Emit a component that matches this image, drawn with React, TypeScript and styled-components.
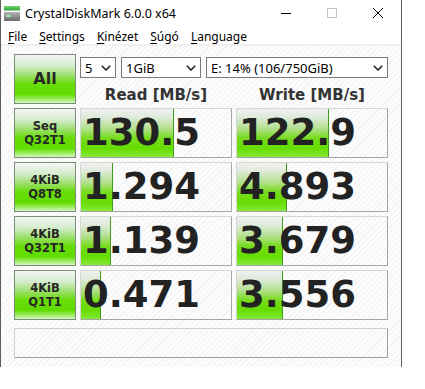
import React from "react";
import styled, { createGlobalStyle } from "styled-components";

const GlobalStyle = createGlobalStyle`
  html, body { margin: 0; padding: 0; background: #ffffff; }
  * { box-sizing: border-box; }
`;

const uiFont = `"Noto Sans", "Open Sans", sans-serif`;
const boldFont = `"DejaVu Sans", "Verdana", sans-serif`;

const Window = styled.div`
  width: 402px;
  height: 367px;
  border-left: 1px solid #5c5c5c;
  border-right: 1px solid #5c5c5c;
  border-bottom: 1px solid #5c5c5c;
  background: #ffffff;
  display: flex;
  flex-direction: column;
  font-family: ${uiFont};
`;

const TitleBar = styled.div`
  height: 26px;
  display: flex;
  align-items: center;
  padding-left: 3px;
`;

const TitleText = styled.div`
  margin-left: 5px;
  font-size: 12.5px;
  color: #000;
  flex: 1;
  white-space: nowrap;
`;

const CaptionButton = styled.div`
  width: 46px;
  height: 26px;
  display: flex;
  align-items: center;
  justify-content: center;
`;

const MenuBar = styled.div`
  height: 15px;
  padding-top: 3px;
  display: flex;
  align-items: center;
  border-bottom: 2px solid #f0f0f0;
  box-sizing: content-box;
`;

const MenuItem = styled.div`
  padding: 0 6px;
  font-size: 12px;
  color: #000;
  white-space: nowrap;
  &:first-child { padding-left: 7px; }
  u { text-decoration: underline; text-underline-offset: 2px; }
`;

const Client = styled.div`
  flex: 1;
  padding: 8px 13px 8px 13px;
  background: repeating-linear-gradient(135deg, #fcfcfc 0px, #fcfcfc 3px, #f2f2f2 3px, #f2f2f2 4px);
`;

const Grid = styled.div`
  display: grid;
  grid-template-columns: 62px 152px 152px;
  grid-auto-rows: 50px;
  gap: 4px;
`;

const GreenButton = styled.div<{ $big?: boolean }>`
  border: 1px solid #7a8c7a;
  background: linear-gradient(to bottom, #f4f6f4 0%, #d6ecce 22%, #9ee070 42%, #68dd08 60%, #60dc00 82%, #9cec60 92%, #d8f6c4 100%);
  display: flex;
  flex-direction: column;
  align-items: center;
  justify-content: center;
  font-family: ${boldFont};
  font-weight: bold;
  font-size: ${(p) => (p.$big ? "16px" : "11.5px")};
  line-height: ${(p) => (p.$big ? "18px" : "14px")};
  color: #262626;
  text-align: center;
`;

const TopArea = styled.div`
  grid-column: 2 / span 2;
  display: flex;
  flex-direction: column;
`;

const SelectRow = styled.div`
  margin-top: 3px;
  height: 21px;
  display: flex;
  gap: 5px;
`;

const Combo = styled.div<{ $w: number }>`
  width: ${(p) => p.$w}px;
  height: 21px;
  border: 1px solid #7a7a7a;
  background: #ffffff;
  display: flex;
  align-items: center;
  justify-content: space-between;
  padding: 0 4px 0 4px;
  font-size: 13px;
  color: #000;
  white-space: nowrap;
`;

const HeaderRow = styled.div`
  flex: 1;
  display: grid;
  grid-template-columns: 152px 152px;
  gap: 4px;
  align-items: end;
`;

const Header = styled.div`
  text-align: center;
  font-family: ${boldFont};
  font-weight: bold;
  font-size: 15px;
  line-height: 18px;
  color: #333333;
  white-space: nowrap;
`;

const ValueBox = styled.div`
  position: relative;
  border: 1px solid;
  border-color: #d6d6d6 #a6a6a6 #a6a6a6 #d6d6d6;
  overflow: hidden;
  display: flex;
  align-items: center;
  padding-left: 2px;
`;

const Bar = styled.div`
  position: absolute;
  left: 0;
  top: 0;
  bottom: 0;
  border-right: 1px solid #3f9c1c;
  background: linear-gradient(to bottom, #eef1ee 0%, #e2ebdf 15%, #b4e090 40%, #78dc20 60%, #66dd00 82%, #86e83a 100%);
`;

const Value = styled.div`
  position: relative;
  font-family: ${boldFont};
  font-weight: bold;
  font-size: 37px;
  line-height: 44px;
  color: #222222;
`;

const StatusBar = styled.div`
  grid-column: 1 / -1;
  height: 30px;
  margin-top: 4px;
  border: 1px solid;
  border-color: #cfcfcf #a0a0a0 #a0a0a0 #cfcfcf;
`;

const Chevron = () => (
  <svg width="10" height="6" viewBox="0 0 10 6">
    <path d="M0.8 0.8 L5 5 L9.2 0.8" fill="none" stroke="#1e1e1e" strokeWidth="1.5" />
  </svg>
);

const AppIcon = () => (
  <svg width="16" height="15" viewBox="0 0 16 15">
    <defs>
      <linearGradient id="gtop" x1="0" y1="0" x2="0" y2="1">
        <stop offset="0" stopColor="#6fd46f" />
        <stop offset="1" stopColor="#2fa53a" />
      </linearGradient>
      <linearGradient id="gbody" x1="0" y1="0" x2="0" y2="1">
        <stop offset="0" stopColor="#b4b4b4" />
        <stop offset="1" stopColor="#6a6a6a" />
      </linearGradient>
    </defs>
    <rect x="0" y="0" width="16" height="4.5" fill="url(#gtop)" />
    <rect x="0" y="6" width="16" height="9" fill="url(#gbody)" />
    <rect x="2" y="9" width="5" height="2" fill="#9ee89a" />
  </svg>
);

type RowData = { l1: string; l2: string; read: string; rw: number; write: string; ww: number };

const rows: RowData[] = [
  { l1: "Seq", l2: "Q32T1", read: "130.5", rw: 93, write: "122.9", ww: 92 },
  { l1: "4KiB", l2: "Q8T8", read: "1.294", rw: 32, write: "4.893", ww: 50 },
  { l1: "4KiB", l2: "Q32T1", read: "1.139", rw: 30, write: "3.679", ww: 46 },
  { l1: "4KiB", l2: "Q1T1", read: "0.471", rw: 20, write: "3.556", ww: 46 },
];

export default function App() {
  return (
    <>
      <GlobalStyle />
      <Window>
        <TitleBar>
          <AppIcon />
          <TitleText>CrystalDiskMark 6.0.0 x64</TitleText>
          <CaptionButton>
            <svg width="10" height="10" viewBox="0 0 10 10">
              <path d="M0 5.5 H10" stroke="#000" strokeWidth="1" />
            </svg>
          </CaptionButton>
          <CaptionButton>
            <svg width="10" height="10" viewBox="0 0 10 10">
              <rect x="0.5" y="0.5" width="9" height="9" fill="none" stroke="#c4c4c4" strokeWidth="1" />
            </svg>
          </CaptionButton>
          <CaptionButton>
            <svg width="10" height="10" viewBox="0 0 10 10">
              <path d="M0 0 L10 10 M10 0 L0 10" stroke="#000" strokeWidth="1" />
            </svg>
          </CaptionButton>
        </TitleBar>
        <MenuBar>
          <MenuItem><u>F</u>ile</MenuItem>
          <MenuItem><u>S</u>ettings</MenuItem>
          <MenuItem><u>K</u>inézet</MenuItem>
          <MenuItem><u>S</u>úgó</MenuItem>
          <MenuItem><u>L</u>anguage</MenuItem>
        </MenuBar>
        <Client>
          <Grid>
            <GreenButton $big>All</GreenButton>
            <TopArea>
              <SelectRow>
                <Combo $w={36}>5<Chevron /></Combo>
                <Combo $w={80}>1GiB<Chevron /></Combo>
                <Combo $w={182}>E: 14% (106/750GiB)<Chevron /></Combo>
              </SelectRow>
              <HeaderRow>
                <Header>Read [MB/s]</Header>
                <Header>Write [MB/s]</Header>
              </HeaderRow>
            </TopArea>
            {rows.map((r, i) => (
              <React.Fragment key={i}>
                <GreenButton>
                  <span>{r.l1}</span>
                  <span>{r.l2}</span>
                </GreenButton>
                <ValueBox>
                  <Bar style={{ width: r.rw }} />
                  <Value>{r.read}</Value>
                </ValueBox>
                <ValueBox>
                  <Bar style={{ width: r.ww }} />
                  <Value>{r.write}</Value>
                </ValueBox>
              </React.Fragment>
            ))}
            <StatusBar />
          </Grid>
        </Client>
      </Window>
    </>
  );
}
